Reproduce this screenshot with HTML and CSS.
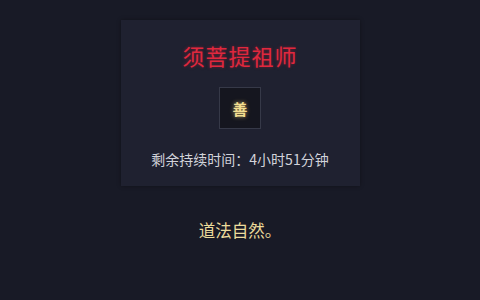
FILE: index.html
```html
<!DOCTYPE html>
<html lang="zh">
<head>
<meta charset="utf-8">
<link rel="stylesheet" href="styles.css">
</head>
<body>
<div class="page">
  <div class="card">
    <div class="title">须菩提祖师</div>
    <div class="badge"><span class="badge-char">善</span></div>
    <div class="time">剩余持续时间：4小时51分钟</div>
  </div>
  <div class="motto">道法自然。</div>
</div>
</body>
</html>
```
FILE: styles.css
```css
html, body {
  margin: 0;
  padding: 0;
  background: #181a26;
  width: 480px;
  height: 300px;
  overflow: hidden;
  font-family: "Noto Sans CJK SC", "Noto Sans", sans-serif;
}
.page {
  display: flex;
  flex-direction: column;
  align-items: center;
  padding-top: 20px;
}
.card {
  width: 239px;
  box-sizing: border-box;
  background: #1f2130;
  box-shadow: 0 0 4px rgba(0,0,0,0.35);
  display: flex;
  flex-direction: column;
  align-items: center;
  padding: 20px 0 17px;
}
.title {
  font-size: 22px;
  line-height: 30px;
  color: #e0283e;
  letter-spacing: 1px;
  text-shadow: 0 0 3px rgba(220, 30, 50, 0.5);
}
.badge {
  margin-top: 17px;
  width: 42px;
  height: 42px;
  box-sizing: border-box;
  border: 1px solid #363948;
  background: #15161f;
  display: flex;
  align-items: center;
  justify-content: center;
}
.badge-char {
  font-size: 15px;
  line-height: 1;
  color: #f2de90;
  font-weight: bold;
  text-shadow: 0 0 4px rgba(240, 210, 120, 0.7);
}
.time {
  margin-top: 20px;
  font-size: 14px;
  line-height: 20px;
  color: #d2d3da;
}
.motto {
  margin-top: 32px;
  font-size: 16.5px;
  line-height: 24px;
  color: #ecdc9c;
  padding-left: 0;
}
```
